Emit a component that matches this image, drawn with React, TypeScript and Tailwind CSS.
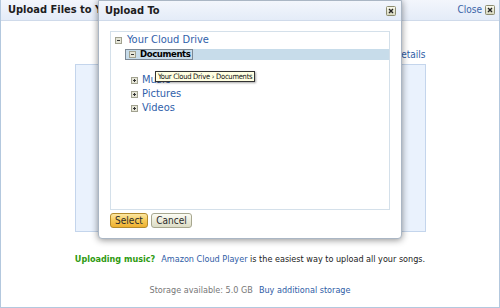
import React from 'react'

function CloseIcon() {
  return (
    <svg width="10" height="10" viewBox="0 0 10 10">
      <defs>
        <linearGradient id="cg" x1="0" y1="0" x2="0" y2="1">
          <stop offset="0" stopColor="#fbfbef" />
          <stop offset="1" stopColor="#d6d6bc" />
        </linearGradient>
      </defs>
      <rect x="0.5" y="0.5" width="9" height="9" rx="1" fill="url(#cg)" stroke="#8c8c70" />
      <path d="M3 3 L7 7 M7 3 L3 7" stroke="#222" strokeWidth="1.4" />
    </svg>
  )
}

function Toggle({ open }: { open: boolean }) {
  return (
    <svg width="7" height="7" viewBox="0 0 7 7" className="shrink-0">
      <rect x="0.5" y="0.5" width="6" height="6" fill="#e6e6d8" stroke="#a2a290" />
      <path d="M2 3.5 H5" stroke="#333" strokeWidth="1" />
      {!open && <path d="M3.5 2 V5" stroke="#333" strokeWidth="1" />}
    </svg>
  )
}

const folders = ['Music', 'Pictures', 'Videos']

export default function App() {
  return (
    <div className="w-[500px] h-[308px] relative overflow-hidden bg-white font-['DejaVu_Sans_Condensed','DejaVu_Sans',sans-serif] text-[9px] leading-[12px] text-[#333]">
      {/* page dialog behind */}
      <div className="h-full flex flex-col border-x border-b border-[#b3c8de]">
        <div className="h-[21px] shrink-0 flex items-center justify-between pl-[7px] pr-[4px] bg-gradient-to-b from-[#f3f6fc] to-[#e4ecf8] border-b border-[#cfdaea]">
          <span className="font-bold text-[11px] text-[#1e1e1e]">Upload Files to Your Cloud Drive</span>
          <span className="flex items-center gap-[3px] text-[#3a64a8] text-[10px]">
            Close <CloseIcon />
          </span>
        </div>
        <div className="flex-1 flex flex-col items-center">
          <div className="w-[351px] mt-[28px] flex justify-end text-[#2f5da6] text-[10px]">
            <span>Details</span>
          </div>
          <div className="w-[351px] h-[168px] mt-[3px] bg-[#eaf2fd] border border-[#c4d5ec]" />
          <p className="mt-[21px] text-[#222]">
            <span className="font-bold text-[#2e9a10]">Uploading music?</span>
            <span className="ml-[6px] text-[#2f5da6]">Amazon Cloud Player</span> is the easiest way to upload all your songs.
          </p>
          <p className="mt-[19px]">
            <span className="text-[#777]">Storage available: 5.0 GB</span>
            <span className="ml-[6px] text-[#2f5da6]">Buy additional storage</span>
          </p>
        </div>
      </div>

      {/* Upload To modal */}
      <div className="absolute left-[98px] top-0 w-[304px] h-[239px] flex flex-col bg-white border border-[#aab6c4] rounded-b-[4px] shadow-[0_1px_7px_rgba(0,0,0,0.45)]">
        <div className="h-[20px] shrink-0 flex items-center justify-between pl-[6px] pr-[5px] bg-gradient-to-b from-[#f3f6fc] to-[#e4ecf8] border-b border-[#cfdaea]">
          <span className="font-bold text-[11px] text-[#1e1e1e]">Upload To</span>
          <CloseIcon />
        </div>
        <div className="ml-[11px] mt-[10px] w-[280px] h-[179px] pt-[1px] border border-[#d4e0ea] flex flex-col">
          <div className="h-[14px] flex items-center pl-[4px] gap-[5px]">
            <Toggle open />
            <span className="text-[#3061aa] text-[11px]">Your Cloud Drive</span>
          </div>
          <div className="h-[14px] flex items-center pl-[14px]">
            <div className="flex-1 h-[11px] bg-[#c7dcea] flex">
              <div className="h-full border border-[#7c8894] flex items-center pl-[3px] pr-[1px] gap-[4px]">
                <Toggle open />
                <span className="font-bold text-[9.5px] tracking-[-0.4px] text-black">Documents</span>
              </div>
            </div>
          </div>
          <div className="h-[12px]" />
          {folders.map((f) => (
            <div key={f} className="h-[14px] flex items-center pl-[20px] gap-[4px]">
              <Toggle open={false} />
              <span className="text-[#3061aa] text-[11px]">{f}</span>
            </div>
          ))}
        </div>
        <div className="ml-[11px] mt-[3px] flex gap-[3px]">
          <button className="w-[38px] h-[15px] rounded-[3px] border border-[#b38a2c] bg-gradient-to-b from-[#fce7a2] via-[#f6c956] to-[#eeb030] text-[10px] leading-[12px] text-[#2a2a2a]">
            Select
          </button>
          <button className="w-[41px] h-[15px] rounded-[3px] border border-[#a7a78f] bg-gradient-to-b from-[#fcfcf4] to-[#dcdcc6] text-[10px] leading-[12px] text-[#2a2a2a]">
            Cancel
          </button>
        </div>
      </div>

      {/* tooltip */}
      <div className="absolute left-[155px] top-[71px] h-[11px] px-[2px] flex items-center bg-[#ffffe1] border border-[#333] shadow-[1px_1px_2px_rgba(0,0,0,0.35)] text-[7.5px] tracking-[-0.25px] leading-[9px] text-[#111]">
        Your Cloud Drive › Documents
      </div>
    </div>
  )
}
